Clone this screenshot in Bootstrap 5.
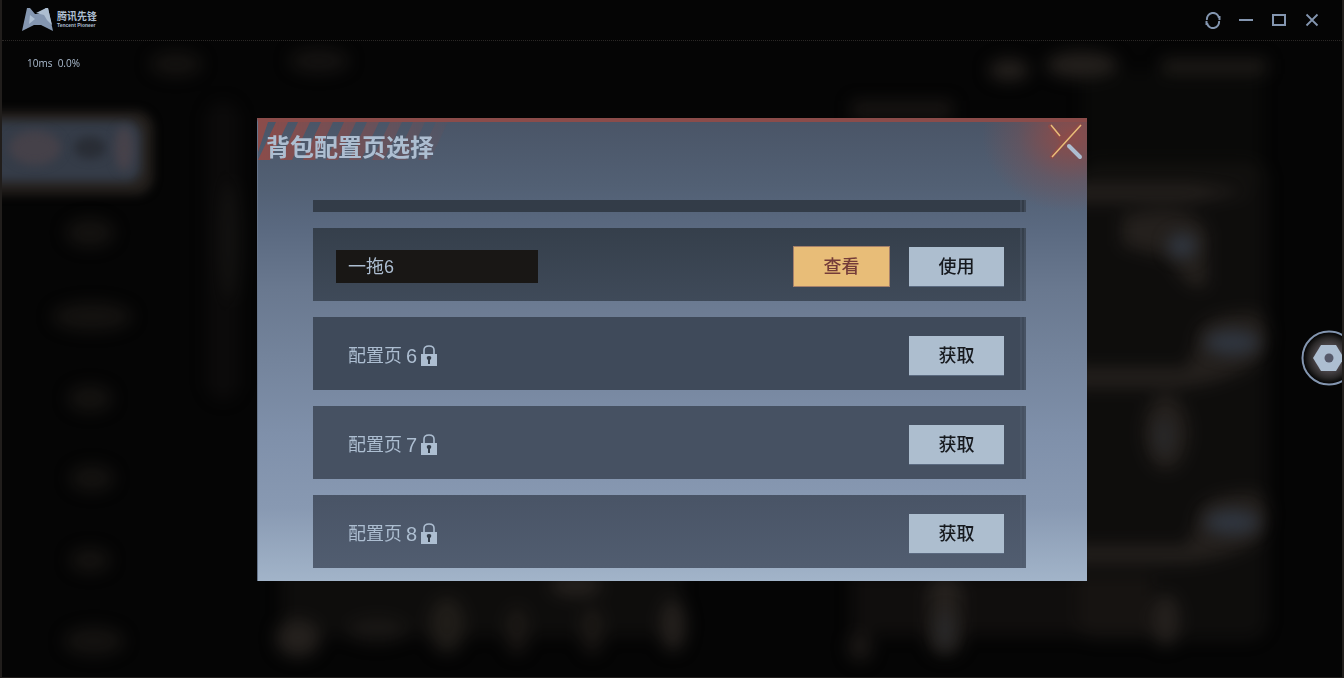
<!DOCTYPE html>
<html lang="zh-CN">
<head>
<meta charset="utf-8">
<meta name="viewport" content="width=device-width, initial-scale=1">
<title>腾讯先锋</title>
<link href="https://cdn.jsdelivr.net/npm/bootstrap@5.3.0/dist/css/bootstrap.min.css" rel="stylesheet">
<style>
:root{--ice:#adbed1;--steel:#8496b0;--rust:#8b4c4a}
body{background:#050505;color:var(--ice);font-family:"Liberation Sans","Noto Sans CJK SC",sans-serif}
.shell{min-height:100vh;border:solid #211e1c;border-width:0 2px 1px;overflow:hidden}
.titlebar{height:41px;padding:0 21px 0 20px;border-bottom:1px dotted #2b2826}
.brand-name{font-size:10px;line-height:10px;font-weight:700}
.brand-sub{font-size:5px;line-height:6px;font-weight:700}
.win-btn{width:17px;height:17px;color:var(--steel)}
.stats{left:25px;top:14px;font:500 10px/16px "Open Sans",sans-serif;color:var(--ice)}
.scene{inset:0}
.stage{padding:77px 16px 95px}
.panel{max-width:830px;border-top:4px solid var(--rust);border-left:1px solid #66758b;
 background:linear-gradient(#4a5567 0,#526074 14%,#5a6980 23%,#69788f 36%,#74849c 52%,#7f90aa 68%,#8899b2 84%,#a2b4c9 100%)}
.panel-deco{inset:0 0 auto 0;height:90px}
.panel-title{font-size:24px;line-height:32px;font-weight:700;padding:10px 10px 0 8px}
.panel-close{right:3px;top:0;width:36px;height:40px}
.slots{padding:36px 61px 13px 55px;gap:16px}
.slot{padding:19px 16px 15px 35px;height:73px;background:#3f4a5a;color:var(--ice);border-right:6px double #56637655}
.slot-cut{height:12px;background:#333c48;border-right:6px double #56637655}
.slot-open{background:linear-gradient(#353f4b,#3f4a59);padding-left:23px}
.slot-b{background:#465162}
.slot-c{background:linear-gradient(#495466,#515d70)}
.slot-name{font-size:18px;line-height:24px}
.slot-num{font-size:20px;line-height:24px}
.slot-input{width:202px;height:33px;padding:0 12px 4px;border:0;border-radius:0;background:#191715;color:var(--ice);font-size:18px}
.slot-input:focus{background:#191715;color:var(--ice)}
.act{width:95px;height:39px;padding:1px 0 0;border:0;border-radius:0;font-size:18px;font-weight:500;background:#adbecf;color:#16191e;box-shadow:0 1px #5b6a80}
.act-view{background:#e8bd78;color:#743c39;box-shadow:0 0 0 1px #a5806a}
.float-ball{right:0;top:289px;width:41px;height:56px}
</style>
</head>
<body>
<div class="shell d-flex flex-column">
 <header class="titlebar d-flex align-items-center justify-content-between">
  <div class="d-flex align-items-center gap-1">
   <svg width="31" height="24" viewBox="0 0 31 24" aria-hidden="true"><path fill="#8496b0" d="M5 0h3l5 6 4 0 7-6h2l5 23-6-3-6-3h-7l-6 3-6 3z"/><path fill="#adbed1" d="M14 5l10-5h2l4 17-5-5-3-5zM8 7l5 4-6 5z"/></svg>
   <div><div class="brand-name">腾讯先锋</div><div class="brand-sub">Tencent Pioneer</div></div>
  </div>
  <div class="d-flex gap-3">
   <button class="win-btn btn p-0 border-0 d-flex" aria-label="刷新"><svg width="17" height="17" viewBox="0 0 17 17" fill="none" stroke="currentColor" stroke-width="2"><path d="M2 8a6 6 0 0 1 12-2M14 9a6 6 0 0 1-12 2"/><path d="M14.500 4v4M1.500 13V9"/></svg></button>
   <button class="win-btn btn p-0 border-0 d-flex" aria-label="最小化"><svg width="17" height="17" viewBox="0 0 17 17"><path fill="currentColor" d="M1 7h14v2H1z"/></svg></button>
   <button class="win-btn btn p-0 border-0 d-flex" aria-label="最大化"><svg width="17" height="17" viewBox="0 0 17 17" fill="none" stroke="currentColor" stroke-width="2"><rect x="2" y="3" width="12" height="10"/></svg></button>
   <button class="win-btn btn p-0 border-0 d-flex" aria-label="关闭"><svg width="17" height="17" viewBox="0 0 17 17" stroke="currentColor" stroke-width="1.800"><path d="M2.500 2.500l11 11M13.500 2.500l-11 11"/></svg></button>
  </div>
 </header>

 <main class="position-relative flex-grow-1">
  <!-- blurred game scene behind the dialog -->
  <svg class="scene position-absolute w-100 h-100" viewBox="0 0 1340 637" preserveAspectRatio="none" aria-hidden="true">
   <defs><filter id="soft" x="-20%" y="-20%" width="140%" height="140%" color-interpolation-filters="sRGB"><feGaussianBlur stdDeviation="8"/></filter>
   <filter id="edge" x="-50%" y="-50%" width="200%" height="200%" color-interpolation-filters="sRGB"><feGaussianBlur stdDeviation="5"/></filter></defs>
   <rect x="-30" y="70" width="181" height="84" rx="18" fill="#24201d" filter="url(#edge)"/>
   <rect x="-30" y="80" width="169" height="61" rx="14" fill="#353c48" filter="url(#edge)"/>
   <ellipse cx="33" cy="107" rx="26" ry="17" fill="#454149" filter="url(#edge)"/>
   <ellipse cx="88" cy="107" rx="16" ry="11" fill="#292d35" filter="url(#edge)"/>
   <ellipse cx="122" cy="108" rx="9" ry="22" fill="#47424a" filter="url(#edge)"/>
   <g fill="#24201d" filter="url(#soft)">
    <g opacity=".5"><ellipse cx="174" cy="23" rx="26" ry="12"/><ellipse cx="317" cy="20" rx="30" ry="12"/><ellipse cx="88" cy="192" rx="24" ry="14"/><ellipse cx="90" cy="276" rx="40" ry="14"/><ellipse cx="88" cy="358" rx="22" ry="13"/><ellipse cx="90" cy="438" rx="22" ry="13"/><ellipse cx="88" cy="520" rx="20" ry="12"/><ellipse cx="92" cy="601" rx="30" ry="14"/></g>
    <rect x="204" y="60" width="34" height="300" rx="17" opacity=".2"/><ellipse cx="228" cy="200" rx="12" ry="60" opacity=".3"/>
    <ellipse cx="1007" cy="29" rx="20" ry="11"/><ellipse cx="1080" cy="24" rx="36" ry="13"/><rect x="1160" y="18" width="104" height="15" opacity=".8"/>
    <rect x="1080" y="30" width="180" height="110" opacity=".15"/><rect x="1075" y="120" width="190" height="480" rx="20" opacity=".3"/>
    <rect x="850" y="60" width="100" height="18" opacity=".6"/>
    <rect x="850" y="535" width="300" height="60" opacity=".35"/>
    <rect x="280" y="530" width="400" height="66" opacity=".3"/>
    <path d="M1070 143h120l60 8-60 10h-120z"/><path d="M1120 175q70-16 85 15v55q-18 10-38-28l-47-12z"/>
    <path d="M1195 300q0-28 60-28 20 20 0 50-40 26-90 25h-110v-20h130z"/><path d="M1195 480q0-28 60-28 20 20 0 50-40 22-90 21h-110v-18h130z"/>
    <ellipse cx="1164" cy="392" rx="22" ry="38"/><ellipse cx="1164" cy="580" rx="14" ry="26"/>
    <rect x="926" y="535" width="34" height="80" rx="17"/><ellipse cx="296" cy="598" rx="22" ry="19"/><ellipse cx="375" cy="590" rx="30" ry="13" opacity=".5"/><ellipse cx="445" cy="585" rx="18" ry="28" opacity=".8"/><ellipse cx="574" cy="545" rx="26" ry="12"/><ellipse cx="671" cy="585" rx="13" ry="26"/><ellipse cx="590" cy="590" rx="12" ry="24" opacity=".6"/><ellipse cx="515" cy="590" rx="12" ry="24" opacity=".6"/><ellipse cx="858" cy="607" rx="12" ry="14" opacity=".7"/>
   </g>
   <g fill="#303640" filter="url(#soft)"><ellipse cx="1230" cy="302" rx="27" ry="12"/><ellipse cx="1230" cy="482" rx="27" ry="12"/><ellipse cx="1180" cy="205" rx="14" ry="12"/><ellipse cx="1162" cy="396" rx="8" ry="18" opacity=".4"/><ellipse cx="943" cy="590" rx="7" ry="20" opacity=".4"/></g>
  </svg>
  <div class="stats position-absolute">10ms&nbsp; 0.0%</div>

  <div class="stage position-relative">
   <section class="panel position-relative mx-auto" aria-labelledby="dlg-title">
    <svg class="panel-deco position-absolute w-100" aria-hidden="true">
     <defs>
      <linearGradient id="fade"><stop offset="0" stop-color="#fff"/><stop offset=".45" stop-color="#fff" stop-opacity=".6"/><stop offset="1" stop-color="#fff" stop-opacity="0"/></linearGradient>
      <mask id="fm"><rect width="205" height="46" fill="url(#fade)"/></mask>
      <radialGradient id="glow" cx=".85" cy=".15" r=".85"><stop offset="0" stop-color="#8b4c4a"/><stop offset=".25" stop-color="#8b4c4a" stop-opacity=".75"/><stop offset=".6" stop-color="#8b4c4a" stop-opacity=".3"/><stop offset="1" stop-color="#8b4c4a" stop-opacity="0"/></radialGradient>
     </defs>
     <path mask="url(#fm)" fill="#8b4c4a" d="M0 0h10L0 30zM18 0h12L12 38H0zM40 0h12L34 38H22zM63 0h12L57 38H45zM86 0h12L80 38H68zM109 0h12l-18 38H91zM132 0h12l-18 38h-12zM155 0h12l-18 38h-12zM178 0h12l-18 38h-12z"/>
     <svg x="100%" overflow="visible"><rect x="-105" width="105" height="90" fill="url(#glow)"/></svg>
    </svg>
    <h1 class="panel-title position-relative mb-0" id="dlg-title">背包配置页选择</h1>
    <button class="panel-close btn p-0 border-0 position-absolute d-flex" aria-label="关闭配置页"><svg width="36" height="40" viewBox="0 0 36 40"><path d="M1 3l14 14 18-15-16 18L3 36l12-16z" fill="#8b4c4a" stroke="#8b4c4a" stroke-width="4"/><path d="M3 3l9 11M33 3L4 35" stroke="#e8bd78" stroke-width="1.500"/><path d="M21 24l11 11" stroke="#adbed1" stroke-width="4" stroke-linecap="round"/></svg></button>
    <div class="slots d-flex flex-column">
     <div class="slot-cut"></div>
     <div class="slot slot-open d-flex align-items-center">
      <input class="slot-input form-control me-auto" type="text" value="一拖6" aria-label="配置页名称">
      <button class="act act-view btn me-3">查看</button><button class="act btn ms-1">使用</button>
     </div>
     <div class="slot d-flex align-items-center">
      <span class="slot-name me-1">配置页</span><span class="slot-num me-1">6</span>
      <svg class="me-auto" width="16" height="22" viewBox="0 0 16 22" aria-label="未解锁"><path d="M3 9V5q0-4 5-4t5 4v4" fill="none" stroke="#adbed1" stroke-width="1.600"/><path d="M0 9h16v12H0z" fill="#adbed1"/><path d="M8 11q3 0 2 3l-1 1v4H7v-4l-1-1q-1-3 2-3z" fill="#343e4b"/></svg>
      <button class="act btn">获取</button>
     </div>
     <div class="slot slot-b d-flex align-items-center">
      <span class="slot-name me-1">配置页</span><span class="slot-num me-1">7</span>
      <svg class="me-auto" width="16" height="22" viewBox="0 0 16 22" aria-label="未解锁"><path d="M3 9V5q0-4 5-4t5 4v4" fill="none" stroke="#adbed1" stroke-width="1.600"/><path d="M0 9h16v12H0z" fill="#adbed1"/><path d="M8 11q3 0 2 3l-1 1v4H7v-4l-1-1q-1-3 2-3z" fill="#343e4b"/></svg>
      <button class="act btn">获取</button>
     </div>
     <div class="slot slot-c d-flex align-items-center">
      <span class="slot-name me-1">配置页</span><span class="slot-num me-1">8</span>
      <svg class="me-auto" width="16" height="22" viewBox="0 0 16 22" aria-label="未解锁"><path d="M3 9V5q0-4 5-4t5 4v4" fill="none" stroke="#adbed1" stroke-width="1.600"/><path d="M0 9h16v12H0z" fill="#adbed1"/><path d="M8 11q3 0 2 3l-1 1v4H7v-4l-1-1q-1-3 2-3z" fill="#343e4b"/></svg>
      <button class="act btn">获取</button>
     </div>
    </div>
   </section>
  </div>
  <button class="float-ball btn p-0 border-0 position-absolute d-flex" aria-label="悬浮菜单"><svg width="41" height="56" viewBox="0 0 41 56"><defs><radialGradient id="ball"><stop offset=".5" stop-color="#4a4549"/><stop offset=".75" stop-color="#2a2828"/><stop offset=".95" stop-color="#070707"/></radialGradient></defs><circle cx="28" cy="28" r="26.500" fill="url(#ball)" stroke="#8496b0" stroke-width="2"/><path d="M12 28l8-13h15l8 13-8 13H20z" fill="#adbed1"/><circle cx="28" cy="28" r="4.500" fill="#56596a"/></svg></button>
 </main>
</div>
</body>
</html>
